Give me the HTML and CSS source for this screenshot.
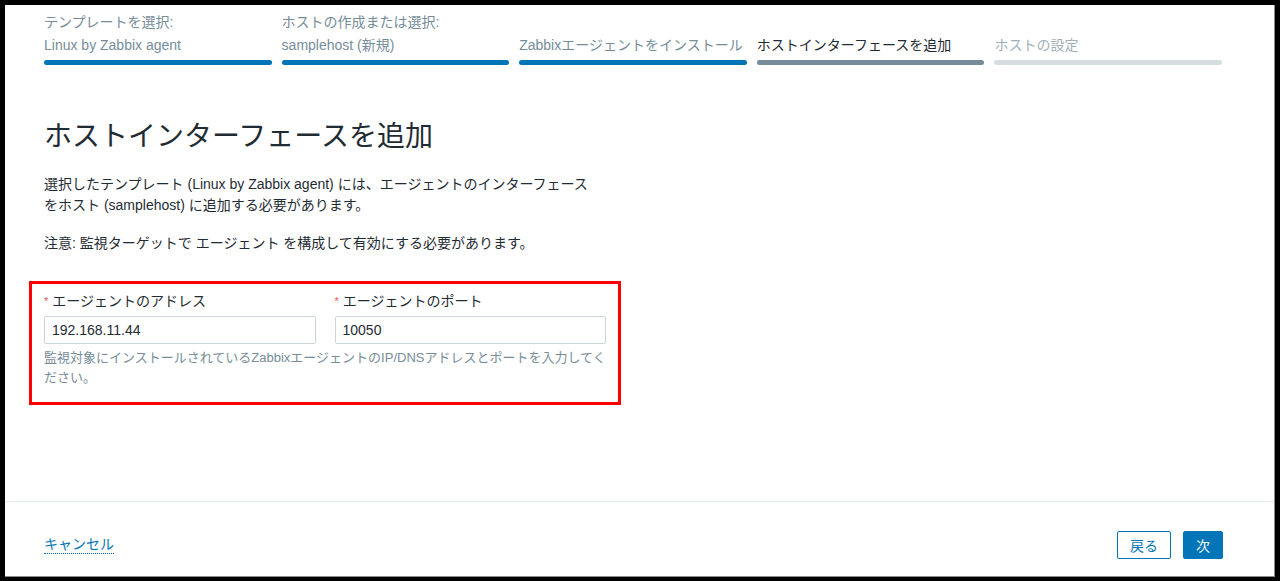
FILE: index.html
```html
<!DOCTYPE html>
<html lang="ja">
<head>
    <meta charset="UTF-8">
    <meta name="viewport" content="width=device-width, initial-scale=1.0">
    <title>ホストインターフェースを追加</title>
    <link rel="stylesheet" href="styles.css">
</head>
<body>
    <div class="wizard">
        <div class="wizard-steps">
            <div class="step step-done">
                <div class="step-label">テンプレートを選択:<br>Linux by Zabbix agent</div>
                <div class="step-bar"></div>
            </div>
            <div class="step step-done">
                <div class="step-label">ホストの作成または選択:<br>samplehost (新規)</div>
                <div class="step-bar"></div>
            </div>
            <div class="step step-done">
                <div class="step-label">Zabbixエージェントをインストール</div>
                <div class="step-bar"></div>
            </div>
            <div class="step step-current">
                <div class="step-label">ホストインターフェースを追加</div>
                <div class="step-bar"></div>
            </div>
            <div class="step step-next">
                <div class="step-label">ホストの設定</div>
                <div class="step-bar"></div>
            </div>
        </div>

        <div class="wizard-body">
            <h1>ホストインターフェースを追加</h1>
            <p class="intro">選択したテンプレート (Linux by Zabbix agent) には、エージェントのインターフェースをホスト (samplehost) に追加する必要があります。</p>
            <p class="note">注意: 監視ターゲットで エージェント を構成して有効にする必要があります。</p>

            <!-- highlighted block -->
            <div class="highlight">
                <div class="field-row">
                    <div class="field">
                        <label for="agent-address"><span class="required">*</span>エージェントのアドレス</label>
                        <input type="text" id="agent-address" value="192.168.11.44">
                    </div>
                    <div class="field">
                        <label for="agent-port"><span class="required">*</span>エージェントのポート</label>
                        <input type="text" id="agent-port" value="10050">
                    </div>
                </div>
                <div class="hint">監視対象にインストールされているZabbixエージェントのIP/DNSアドレスとポートを入力してください。</div>
            </div>
        </div>

        <div class="wizard-footer">
            <a href="#" class="cancel-link">キャンセル</a>
            <div class="footer-buttons">
                <button class="btn-alt">戻る</button>
                <button class="btn-main">次</button>
            </div>
        </div>
    </div>
</body>
</html>
```

FILE: styles.css
```css
* {
    box-sizing: border-box;
    font-family: Arial, 'Liberation Sans', 'Noto Sans CJK JP', sans-serif;
}

body {
    background: #000;
    margin: 0;
    padding: 5px 5px 4px 5px;
}

.wizard {
    background: #fff;
    width: 1270px;
    height: 572px;
    display: flex;
    flex-direction: column;
    border-right: 1px solid #8c8c8c;
    border-bottom: 1px solid #8c8c8c;
    color: #1f2c33;
}

.wizard-steps {
    display: grid;
    grid-template-columns: repeat(5, 1fr);
    gap: 10px;
    padding: 6px 52px 0 39px;
}

.step {
    display: flex;
    flex-direction: column;
    justify-content: flex-end;
}

.step-label {
    font-size: 14px;
    line-height: 23px;
    color: #768d99;
    white-space: nowrap;
}

.step-bar {
    height: 5px;
    border-radius: 3px;
    margin-top: 3px;
    background: #0275b8;
}

.step-current .step-label {
    color: #1f2c33;
}

.step-current .step-bar {
    background: #768d99;
}

.step-next .step-label {
    color: #9fb0b9;
}

.step-next .step-bar {
    background: #d5dde1;
}

.wizard-body {
    flex: 1;
    padding: 0 52px 0 39px;
}

h1 {
    font-size: 28px;
    font-weight: normal;
    line-height: 34px;
    margin: 55px 0 0 0;
}

.intro,
.note {
    font-size: 14px;
    line-height: 21px;
    margin: 0;
    max-width: 552px;
}

.intro {
    margin-top: 20px;
}

.note {
    margin-top: 17px;
}

.highlight {
    border: 3px solid #ff0000;
    width: 592px;
    margin: 27px 0 0 -15px;
    padding: 7px 12px 14px 12px;
}

.field-row {
    display: grid;
    grid-template-columns: 1fr 1fr;
    gap: 19px;
}

.field label {
    display: block;
    font-size: 14px;
    line-height: 20px;
    margin-bottom: 5px;
}

.required {
    color: #e45959;
    font-size: 11px;
    vertical-align: top;
    margin-right: 4px;
}

.field input {
    width: 100%;
    height: 28px;
    border: 1px solid #cbd5da;
    border-radius: 2px;
    padding: 0 7px;
    font-size: 14px;
    color: #1f2c33;
}

.hint {
    font-size: 13px;
    line-height: 20px;
    color: #768d99;
    margin-top: 4px;
}

.wizard-footer {
    border-top: 1px solid #e3eaf0;
    height: 75px;
    display: flex;
    justify-content: space-between;
    align-items: flex-start;
    padding: 29px 51px 0 39px;
}

.cancel-link {
    color: #0275b8;
    text-decoration: none;
    font-size: 14px;
    line-height: 18px;
    margin-top: 4px;
    border-bottom: 1px dotted #0275b8;
}

.footer-buttons {
    display: flex;
    gap: 12px;
}

button {
    height: 28px;
    font-size: 14px;
    border-radius: 2px;
    padding: 0 12px;
    cursor: pointer;
}

.btn-alt {
    background: #fff;
    color: #0275b8;
    border: 1px solid #0275b8;
}

.btn-main {
    background: #0275b8;
    color: #fff;
    border: 1px solid #0275b8;
}
```
